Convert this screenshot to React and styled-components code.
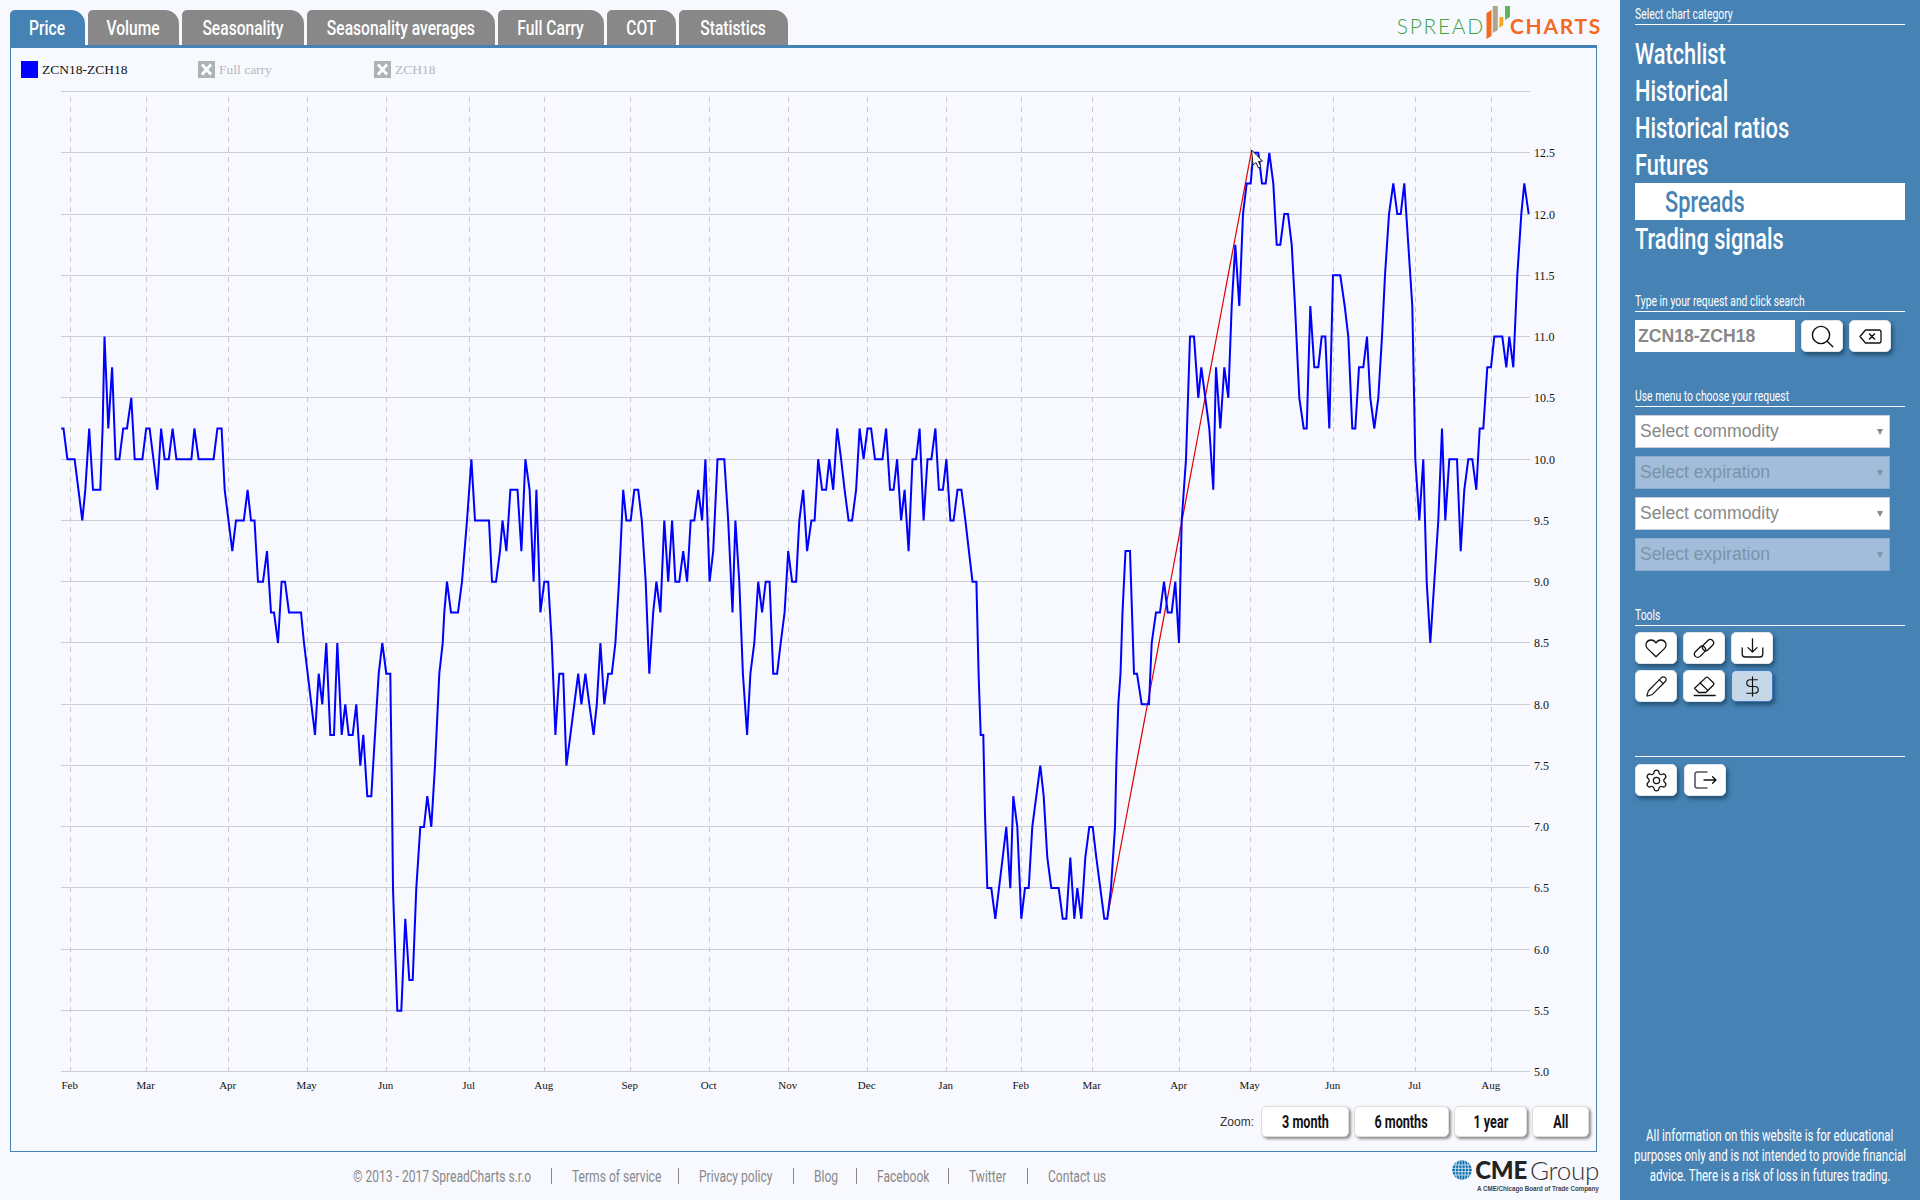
import React from "react";
import styled, { createGlobalStyle, css } from "styled-components";
import { Pencil, DollarSign, Settings } from "lucide-react";

const BLUE = "#4682b4";
const PAGE = "#f8f9ff";
const NARROW = '"Roboto", "Liberation Sans", sans-serif';

const narrow = (k, origin = "left") => css`
  display: inline-block;
  white-space: nowrap;
  transform: scaleX(${k});
  transform-origin: ${origin} center;
`;

const Global = createGlobalStyle`
  html, body { margin: 0; padding: 0; background: ${PAGE}; }
  body { overflow: hidden; }
  * { box-sizing: border-box; }
`;

const Shell = styled.div`
  display: grid;
  grid-template-columns: 1620px 300px;
  width: 1920px;
  height: 1200px;
  background: ${PAGE};
`;

const Main = styled.main`
  display: flex;
  flex-direction: column;
  padding-top: 10px;
  min-width: 0;
`;

const Header = styled.header`
  display: flex;
  justify-content: space-between;
  align-items: flex-start;
  height: 35px;
  padding: 0 18px 0 10px;
`;

const Tabs = styled.nav`
  display: flex;
  gap: 3px;
`;

const Tab = styled.div`
  display: flex;
  align-items: center;
  justify-content: center;
  flex: none;
  width: ${(p) => p.$w}px;
  height: 35px;
  background: ${(p) => (p.$active ? BLUE : "#888888")};
  border-radius: 5px 14px 0 0;
  color: #fff;
  font: 500 20px ${NARROW};
`;

const TabLabel = styled.span`
  ${narrow(0.78, "center")}
  flex: none;
`;

const Logo = styled.div`
  display: flex;
  align-items: flex-start;
  margin-top: -4px;
  height: 33px;
`;

const LogoSpread = styled.span`
  font: 300 21px/24px "Lato", sans-serif;
  color: #3fa33f;
  letter-spacing: 1.7px;
  margin-top: 8px;
`;

const LogoCharts = styled.span`
  font: 700 21px/24px "Lato", sans-serif;
  color: #f26a21;
  letter-spacing: 1.7px;
  margin-top: 8px;
`;

const Panel = styled.section`
  display: flex;
  flex-direction: column;
  margin-left: 10px;
  width: 1587px;
  height: 1107px;
  border: 1px solid ${BLUE};
  border-top-width: 3px;
`;

const Legend = styled.div`
  display: flex;
  align-items: center;
  height: 17px;
  margin: 13px 0 7px 10px;
`;

const LegendItem = styled.div`
  display: flex;
  align-items: center;
  gap: 4px;
  width: ${(p) => p.$w}px;
  font: 13.5px "Liberation Serif", serif;
  color: ${(p) => (p.$off ? "#b4b8bc" : "#111")};
`;

const Swatch = styled.span`
  width: 17px;
  height: 17px;
  background: #0000ff;
`;

const Chart = styled.svg`
  display: block;
  width: 1585px;
  height: 1015px;
  flex: none;
`;

const ZoomRow = styled.div`
  display: flex;
  justify-content: flex-end;
  align-items: center;
  gap: 5px;
  padding: 6px 7px 0 0;
`;

const ZoomLabel = styled.span`
  font: 12px "Liberation Sans", sans-serif;
  color: #333;
  margin-right: 2px;
`;

const ZoomButton = styled.button`
  display: flex;
  align-items: center;
  justify-content: center;
  width: ${(p) => p.$w}px;
  height: 31px;
  padding: 0;
  background: #fff;
  border: 1px solid #ddd;
  border-radius: 5px;
  box-shadow: 2px 2px 3px #8a8a8a;
  color: #111;
  font: 700 18px ${NARROW};
`;

const ZoomText = styled.span`
  ${narrow(0.7, "center")}
  flex: none;
`;

const Footer = styled.footer`
  display: flex;
  align-items: center;
  gap: 20px;
  height: 48px;
  padding: 0 21px 0 353px;
`;

const FootLink = styled.span`
  width: ${(p) => p.$w}px;
  flex: none;
  color: #888;
  font: 400 17px ${NARROW};
  white-space: nowrap;
`;

const FootText = styled.span`
  ${narrow(0.71)}
`;

const FootSep = styled.span`
  width: 1px;
  height: 16px;
  background: #888;
  flex: none;
`;

const Cme = styled.div`
  display: flex;
  flex-direction: column;
  align-items: flex-end;
  margin-left: auto;
`;

const CmeTop = styled.div`
  display: flex;
  align-items: center;
  gap: 3px;
  height: 24px;
`;

const CmeBold = styled.span`
  font: 900 24px/24px "Lato", sans-serif;
  color: #222;
  letter-spacing: -0.2px;
`;

const CmeThin = styled.span`
  font: 300 26px/24px "Lato", sans-serif;
  color: #333;
  letter-spacing: -0.3px;
`;

const CmeSub = styled.div`
  ${narrow(0.83, "right")}
  font: 700 7.5px/10px "Liberation Sans", sans-serif;
  color: #444;
  margin-top: 2px;
`;

const Side = styled.aside`
  display: flex;
  flex-direction: column;
  background: ${BLUE};
  padding: 0 15px;
  color: #fff;
`;

const Heading = styled.div`
  height: 25px;
  margin-top: ${(p) => p.$top ?? 30}px;
  padding-top: 5px;
  border-bottom: 1px solid #fff;
  font: 400 14px/19px ${NARROW};
`;

const HeadText = styled.span`
  ${narrow(0.74)}
`;

const Menu = styled.div`
  margin-top: 10px;
`;

const MenuItem = styled.div`
  height: 37px;
  padding-left: ${(p) => (p.$active ? 30 : 0)}px;
  background: ${(p) => (p.$active ? "#fff" : "transparent")};
  color: ${(p) => (p.$active ? BLUE : "#fff")};
  font: 500 29px/39px ${NARROW};
`;

const MenuText = styled.span`
  ${narrow(0.75)}
`;

const InputRow = styled.div`
  display: flex;
  gap: 6px;
  margin-top: 8px;
`;

const SearchInput = styled.input`
  width: 160px;
  height: 32px;
  padding: 0 3px;
  background: #fff;
  border: 0;
  color: #888;
  font: 700 17.6px "Liberation Sans", sans-serif;
  outline: none;
`;

const IconButton = styled.button`
  display: flex;
  align-items: center;
  justify-content: center;
  width: 42px;
  height: 32px;
  padding: 0;
  background: ${(p) => (p.$on ? "#c6d7e8" : "#fff")};
  border: 1px solid ${(p) => (p.$on ? "#3d78c9" : "#dfe6ee")};
  border-radius: 5px;
  box-shadow: 2px 3px 4px #24506f;
  color: #111;
`;

const SelectList = styled.div`
  display: flex;
  flex-direction: column;
  gap: 8px;
  width: 255px;
  margin-top: 8px;
`;

const SelectBox = styled.div`
  display: flex;
  align-items: center;
  justify-content: space-between;
  height: 33px;
  padding: 0 6px 0 4px;
  background: ${(p) => (p.$off ? "#a1bdd9" : "#fff")};
  border: 1px solid ${(p) => (p.$off ? "#8dabc9" : "#ccd")};
  color: ${(p) => (p.$off ? "#7a93ad" : "#888")};
  font: 17.6px "Liberation Sans", sans-serif;
  &::after {
    content: "";
    border-left: 3px solid transparent;
    border-right: 3px solid transparent;
    border-top: 6px solid ${(p) => (p.$off ? "#7a93ad" : "#888")};
  }
`;

const ToolGrid = styled.div`
  display: grid;
  grid-template-columns: repeat(3, 42px);
  gap: 6px;
  margin-top: 6px;
`;

const Divider = styled.div`
  height: 1px;
  background: #fff;
  margin-top: 54px;
`;

const BottomTools = styled.div`
  display: flex;
  gap: 7px;
  margin-top: 7px;
`;

const Disclaimer = styled.div`
  margin: auto -15px 0;
  padding-bottom: 14px;
  display: flex;
  flex-direction: column;
  align-items: center;
  font: 400 16px/20px ${NARROW};
`;

const DiscLine = styled.div`
  ${narrow(0.72, "center")}
`;

/* ---------- data ---------- */
const series = [
  [61.2,10.25],[63.5,10.25],[67.4,10],[74.6,10],[82.3,9.5],[85.3,9.75],[89.2,10.25],[93,9.75],[100.3,9.75],[102.6,10.25],[104.5,11],[108.3,10.25],[112.1,10.75],[115.6,10],[119.4,10],[123.2,10.25],[127,10.25],[131.3,10.5],[134.7,10],[142.4,10],[146.2,10.25],[149.6,10.25],[157.3,9.75],[161.1,10.25],[164.6,10],[168.8,10],[172.6,10.25],[176.4,10],[191.4,10],[194.4,10.25],[198.6,10],[213.6,10],[217.4,10.25],[221.6,10.25],[224.7,9.75],[232.3,9.25],[236,9.5],[243.8,9.5],[247.6,9.75],[251,9.5],[254.5,9.5],[258,9],[263,9],[267,9.25],[271,8.75],[274,8.75],[278,8.5],[281.6,9],[285,9],[289,8.75],[301,8.75],
  [304,8.5],[315,7.75],[318.7,8.25],[322.3,8],[326.3,8.5],[330.3,7.75],[334,7.75],[337.3,8.5],[341.7,7.75],[345.3,8],[348.7,7.75],[352.7,7.75],[356.3,8],[360.3,7.5],[363.3,7.75],[367.3,7.25],[371.3,7.25],[375,7.75],[378.7,8.25],[382.3,8.5],[386.3,8.25],[390.3,8.25],[392,7.25],[393,6.5],[394,6.25],[397.3,5.5],[401.3,5.5],[405.3,6.25],[409.3,5.75],[412.7,5.75],[416.3,6.5],[420.3,7],[424,7],[427.3,7.25],[431.3,7],[435,7.5],[439.3,8.25],[442.7,8.5],[444.3,8.75],
  [447,9],[451,8.75],[458,8.75],[462,9],[467,9.5],[471.4,10],[475,9.5],[489,9.5],[492,9],[496,9],[500,9.25],[502.5,9.5],[506.4,9.25],[510.4,9.75],[517.5,9.75],[521.4,9.25],[525.4,10],[529.6,9.75],[533.6,9],[536.4,9.75],[540.4,8.75],[544.3,9],[548.2,9],[551.8,8.5],[555.4,7.75],[559.3,8.25],[563.2,8.25],[566.4,7.5],[570.4,7.75],[574.3,8],[578.2,8.25],[581.4,8],[585.4,8.25],[589.3,8],[593.6,7.75],[596.8,8],[600.4,8.5],[604.3,8],[608.2,8.25],[611.8,8.25],[615.4,8.5],[619,9],[623.2,9.75],[626.4,9.5],[630.7,9.5],[634.3,9.75],[638.2,9.75],[641.8,9.5],[645.7,9],[649.3,8.25],[653.2,8.75],[656.4,9],[660.4,8.75],[664.3,9.5],[668.2,9],[672.1,9.5],[675.4,9],[679.3,9],[683.2,9.25],[687.1,9],[690.7,9.5],[694.3,9.5],[698.2,9.75],[702.1,9.5],[705.4,10],[709.6,9],[713.2,9.25],[717.5,10],[724.3,10],[728.2,9.5],[732.5,8.75],[735.4,9.5],[739.3,9],[742.9,8.25],[747.1,7.75],[750.4,8.25],[754.3,8.5],[758.2,9],[762.1,8.75],[765.7,9],[769.6,9],[773.2,8.25],[777.1,8.25],[780.7,8.5],[784.6,8.75],[788.2,9.25],[792.1,9],[796.1,9],[799.3,9.5],[803.2,9.75],[807.1,9.25],[811.4,9.5],[814.6,9.5],[818.2,10],[822.1,9.75],[826.1,9.75],[829.3,10],[833.2,9.75],[837.1,10.25],[841.1,10],[844.6,9.75],[848.6,9.5],[852.1,9.5],[856.1,9.75],[859.6,10.25],[863.6,10],[867.5,10.25],[871.1,10.25],[875,10],[882.5,10],[886.1,10.25],[890,9.75],[893.6,9.75],[897.1,10],[901.1,9.5],[904.6,9.75],[908.6,9.25],[912.5,10],[916.1,10],[919.6,10.25],[923.6,9.5],[927.5,10],[931.4,10],[935.4,10.25],[938.9,9.75],[942.9,9.75],[946.4,10],[950.4,9.5],[953.6,9.5],[957.5,9.75],[961.4,9.75],[965.4,9.5],[968.9,9.25],[972.5,9],[976.4,9],[978.6,8.25],[980.7,7.75],[983.3,7.75],[985,7.1],[987.3,6.5],[991.3,6.5],[995.3,6.25],[999,6.5],[1002.7,6.75],[1006.3,7],[1010.3,6.5],[1013.3,7.25],[1017.3,7],[1021.3,6.25],[1025,6.5],[1028.7,6.5],[1032.3,7],[1036.3,7.25],[1040.3,7.5],[1043.7,7.25],[1047.3,6.75],[1051.3,6.5],[1058.7,6.5],[1062.7,6.25],[1066.3,6.25],[1070.3,6.75],[1074.3,6.25],[1077.3,6.5],[1081.3,6.25],[1085.3,6.75],[1089.3,7],[1092.7,7],[1096.3,6.75],[1100.3,6.5],[1104.3,6.25],[1107.3,6.25],[1111,6.5],[1115,7],[1116.3,7.5],[1118.3,8],[1120.5,8.25],[1122.5,8.75],[1125.5,9.25],[1130,9.25],[1134,8.25],[1137,8.25],[1141.7,8],[1149,8],[1151.7,8.5],[1156,8.75],[1160,8.75],[1164,9],[1167.7,8.75],[1171.7,8.75],[1175.3,9],[1179,8.5],[1181.7,9.5],[1186,10],[1190,11],[1194,11],[1198.3,10.5],[1201.3,10.75],[1205.3,10.5],[1209.3,10.25],[1213.3,9.75],[1216,10.75],[1220.3,10.25],[1224.3,10.75],[1228.3,10.5],[1231.7,11.25],[1235.3,11.75],[1239.3,11.25],[1243,12],[1246.7,12.25],[1250.7,12.25],[1253.3,12.5],[1258.3,12.5],[1262,12.25],[1265.7,12.25],[1269.3,12.5],[1273.3,12.25],[1276.7,11.75],[1280.3,11.75],[1284.3,12],[1288,12],[1291.7,11.75],[1295,11.25],[1299.3,10.5],[1303.7,10.25],[1306.7,10.25],[1310.3,11.25],[1314.3,10.75],[1318.3,10.75],[1321.7,11],[1325.3,11],[1329.3,10.25],[1333,11.5],[1340.3,11.5],[1344.7,11.25],[1348.3,11],[1352.3,10.25],[1355.3,10.25],[1359,10.75],[1363.3,10.75],[1367,11],[1370.3,10.5],[1374.3,10.25],[1378.3,10.5],[1382,11],[1385,11.5],[1389,12],[1393.3,12.25],[1397.3,12],[1400.7,12],[1404.3,12.25],[1408.3,11.75],[1412.3,11.25],[1415.3,10],[1419.3,9.5],[1423.3,10],[1426.7,9],[1430.3,8.5],[1434.3,9],[1438.3,9.5],[1442,10.25],[1445.3,9.5],[1449.3,10],[1457,10],[1460.7,9.25],[1464.3,9.75],[1468.3,10],[1472.3,10],[1476.3,9.75],[1479.7,10.25],[1483.3,10.25],[1487.3,10.75],[1491,10.75],[1494.3,11],[1502.3,11],[1506.3,10.75],[1509.3,11],[1513.3,10.75],[1517.3,11.5],[1521.3,12],[1524.3,12.25],[1528.7,12],
];

const Y = (v) => 91.5 + (13 - v) * 122.56;
const points = series.map(([x, v]) => `${x},${Y(v).toFixed(1)}`).join(" ");

const gridRows = [
  [13, 91], [12.5, 152], [12, 214], [11.5, 275], [11, 336], [10.5, 397], [10, 459], [9.5, 520], [9, 581],
  [8.5, 642], [8, 704], [7.5, 765], [7, 826], [6.5, 887], [6, 949], [5.5, 1010], [5, 1071],
];

const months = [
  ["Feb",70.5],["Mar",146.5],["Apr",228.5],["May",307.5],["Jun",386.5],["Jul",469.5],["Aug",544.5],["Sep",630.5],["Oct",709.5],["Nov",788.5],["Dec",867.5],["Jan",946.5],["Feb",1021.5],["Mar",1092.5],["Apr",1179.5],["May",1250.5],["Jun",1333.5],["Jul",1415.5],["Aug",1491.5],
];

const tabs = [
  ["Price", 75, true], ["Volume", 91], ["Seasonality", 122], ["Seasonality averages", 188],
  ["Full Carry", 106], ["COT", 69], ["Statistics", 109],
];

const footerLinks = [
  ["© 2013 - 2017 SpreadCharts s.r.o", 177.5], ["Terms of service", 86], ["Privacy policy", 74.5],
  ["Blog", 22], ["Facebook", 51], ["Twitter", 38], ["Contact us", 61],
];

const menu = ["Watchlist", "Historical", "Historical ratios", "Futures", "Spreads", "Trading signals"];

/* ---------- drawings ---------- */
const Line = ({ w = 22, h = 22, vb = "0 0 24 24", sw = 1.3, children }) => (
  <svg width={w} height={h} viewBox={vb} fill="none" stroke="#111" strokeWidth={sw} strokeLinecap="round" strokeLinejoin="round">
    {children}
  </svg>
);

const SearchIcon = () => (
  <Line w={23} h={23} vb="0 0 23 23" sw={1.4}>
    <circle cx="10" cy="10" r="8.6" />
    <path d="M16.4 16.4 L21.8 21.8" />
  </Line>
);
const BackspaceIcon = () => (
  <Line w={23} h={15} vb="0 0 23 15">
    <path d="M6.5 1 H20 a2 2 0 0 1 2 2 V12 a2 2 0 0 1 -2 2 H6.5 L1 7.5 Z" />
    <path d="M10.5 5 L15.5 10 M15.5 5 L10.5 10" strokeWidth="1.5" />
  </Line>
);
const HeartIcon = () => (
  <Line w={22} h={19} vb="0 0 22 19">
    <path d="M11 17.8 L2.6 9.6 C-0.6 6 1.5 1 6 1 C8.2 1 10 2.2 11 4 C12 2.2 13.8 1 16 1 C20.5 1 22.6 6 19.4 9.6 Z" />
  </Line>
);
const LinkIcon = () => (
  <Line w={22} h={21} vb="0 0 22 21">
    <rect x="0.5" y="10.5" width="13" height="6.6" rx="3.3" transform="rotate(-45 7 13.8)" />
    <rect x="8.5" y="3.8" width="13" height="6.6" rx="3.3" transform="rotate(-45 15 7.1)" />
  </Line>
);
const DownloadIcon = () => (
  <Line w={23} h={20} vb="0 0 23 20">
    <path d="M11.5 1 V14 M7 9.6 L11.5 14 L16 9.6" />
    <path d="M1.2 10 V16 a3 3 0 0 0 3 3 H18.8 a3 3 0 0 0 3 -3 V10" />
  </Line>
);
const EraserIcon = () => (
  <Line w={23} h={22} vb="0 0 23 22">
    <path d="M1.2 20.5 H22.2" />
    <path d="M5.6 17.5 L1.6 13.2 L12.8 2.6 a1.6 1.6 0 0 1 2.2 0 L20.4 7.8 a1.6 1.6 0 0 1 0 2.2 L12.8 17.5 Z" />
    <path d="M7.2 8 L14.8 15.4" />
  </Line>
);
const LogoutIcon = () => (
  <Line w={23} h={18} vb="0 0 23 18">
    <path d="M13 1 H3.2 a2.2 2.2 0 0 0 -2.2 2.2 V14.8 a2.2 2.2 0 0 0 2.2 2.2 H13" stroke="#555" strokeWidth="1.6" />
    <path d="M10 9 H22 M18.6 5.8 L22 9 L18.6 12.2" />
  </Line>
);

const OffBox = () => (
  <svg width="17" height="17" viewBox="0 0 17 17">
    <rect width="17" height="17" fill="#aab4b4" />
    <path d="M4 3.5 L13 13.5 M13 3.5 L4 13.5" stroke="#fff" strokeWidth="2.8" />
  </svg>
);

const LogoBars = () => (
  <svg width="25" height="33" viewBox="0 0 25 33">
    <path d="M1.5 7 L6.5 4 V30 L1.5 33 Z" fill="#f26a21" />
    <path d="M7.7 0 H12.8 V24 L7.7 27 Z" fill="#b0a48a" />
    <path d="M14.4 11 H18.3 V19 L14.4 22 Z" fill="#f5a623" />
    <path d="M20 0 H25 V11 L20 14 Z" fill="#5cb85c" />
  </svg>
);

const Globe = () => (
  <svg width="20" height="20" viewBox="0 0 20 20">
    <circle cx="10" cy="10" r="9.8" fill="#0b6fb0" />
    <path d="M0 5 H20 M0 8.3 H20 M0 11.7 H20 M0 15 H20 M10 0 V20 M5 1 C3 6 3 14 5 19 M15 1 C17 6 17 14 15 19 M7.4 0.5 C6.5 6 6.5 14 7.4 19.5 M12.6 0.5 C13.5 6 13.5 14 12.6 19.5" stroke="#e9f3fa" strokeWidth="0.8" fill="none" />
  </svg>
);

export default function App() {
  return (
    <Shell>
      <Global />
      <Main>
        <Header>
          <Tabs>
            {tabs.map(([t, w, a]) => (
              <Tab key={t} $w={w} $active={a}>
                <TabLabel>{t}</TabLabel>
              </Tab>
            ))}
          </Tabs>
          <Logo>
            <LogoSpread>SPREAD</LogoSpread>
            <LogoBars />
            <LogoCharts>CHARTS</LogoCharts>
          </Logo>
        </Header>
        <Panel>
          <Legend>
            <LegendItem $w={177}>
              <Swatch />
              ZCN18-ZCH18
            </LegendItem>
            <LegendItem $w={176} $off>
              <OffBox />
              Full carry
            </LegendItem>
            <LegendItem $w={100} $off>
              <OffBox />
              ZCH18
            </LegendItem>
          </Legend>
          <Chart viewBox="11 85 1585 1015">
            {months.map(([m, x], i) => (
              <line key={i} x1={x} x2={x} y1={97} y2={1071} stroke="#c8c8ce" strokeDasharray="5 5" />
            ))}
            {gridRows.map(([v, r]) => (
              <line key={v} x1={61} x2={1530} y1={r + 0.5} y2={r + 0.5} stroke="#cdcdd5" />
            ))}
            {gridRows.slice(1).map(([v, r]) => (
              <text key={v} x={1534} y={r + 4.5} fontFamily='"Liberation Serif", serif' fontSize="12" fill="#111">
                {v.toFixed(1)}
              </text>
            ))}
            {months.map(([m, x], i) => (
              <text key={i} x={x - 0.8} y={1089} textAnchor="middle" fontFamily='"Liberation Serif", serif' fontSize="11" fill="#111">
                {m}
              </text>
            ))}
            <line x1="1107.3" y1="918" x2="1251.5" y2="151" stroke="#dd0000" strokeWidth="1.2" />
            <polyline points={points} fill="none" stroke="#0000ff" strokeWidth="2" strokeLinejoin="miter" />
            <path d="M1251.5 150 L1262.5 161 L1258.5 161.5 L1261 167 L1258.5 168 L1256 162.5 L1253 165 Z" fill="#fff" stroke="#111" strokeWidth="1" />
          </Chart>
          <ZoomRow>
            <ZoomLabel>Zoom:</ZoomLabel>
            <ZoomButton $w={88}><ZoomText>3 month</ZoomText></ZoomButton>
            <ZoomButton $w={95}><ZoomText>6 months</ZoomText></ZoomButton>
            <ZoomButton $w={73}><ZoomText>1 year</ZoomText></ZoomButton>
            <ZoomButton $w={57}><ZoomText>All</ZoomText></ZoomButton>
          </ZoomRow>
        </Panel>
        <Footer>
          {footerLinks.map(([t, w], i) => (
            <React.Fragment key={t}>
              {i > 0 && <FootSep />}
              <FootLink $w={w}><FootText>{t}</FootText></FootLink>
            </React.Fragment>
          ))}
          <Cme>
            <CmeTop>
              <Globe />
              <CmeBold>CME</CmeBold>
              <CmeThin>Group</CmeThin>
            </CmeTop>
            <CmeSub>A CME/Chicago Board of Trade Company</CmeSub>
          </Cme>
        </Footer>
      </Main>
      <Side>
        <Heading $top={0}><HeadText>Select chart category</HeadText></Heading>
        <Menu>
          {menu.map((m) => (
            <MenuItem key={m} $active={m === "Spreads"}>
              <MenuText>{m}</MenuText>
            </MenuItem>
          ))}
        </Menu>
        <Heading><HeadText>Type in your request and click search</HeadText></Heading>
        <InputRow>
          <SearchInput readOnly value="ZCN18-ZCH18" />
          <IconButton><SearchIcon /></IconButton>
          <IconButton><BackspaceIcon /></IconButton>
        </InputRow>
        <Heading><HeadText>Use menu to choose your request</HeadText></Heading>
        <SelectList>
          <SelectBox>Select commodity</SelectBox>
          <SelectBox $off>Select expiration</SelectBox>
          <SelectBox>Select commodity</SelectBox>
          <SelectBox $off>Select expiration</SelectBox>
        </SelectList>
        <Heading><HeadText>Tools</HeadText></Heading>
        <ToolGrid>
          <IconButton><HeartIcon /></IconButton>
          <IconButton><LinkIcon /></IconButton>
          <IconButton><DownloadIcon /></IconButton>
          <IconButton><Pencil size={23} strokeWidth={1.2} /></IconButton>
          <IconButton><EraserIcon /></IconButton>
          <IconButton $on><DollarSign size={23} strokeWidth={1.2} /></IconButton>
        </ToolGrid>
        <Divider />
        <BottomTools>
          <IconButton><Settings size={25} strokeWidth={1.2} /></IconButton>
          <IconButton><LogoutIcon /></IconButton>
        </BottomTools>
        <Disclaimer>
          <DiscLine>All information on this website is for educational</DiscLine>
          <DiscLine>purposes only and is not intended to provide financial</DiscLine>
          <DiscLine>advice. There is a risk of loss in futures trading.</DiscLine>
        </Disclaimer>
      </Side>
    </Shell>
  );
}
